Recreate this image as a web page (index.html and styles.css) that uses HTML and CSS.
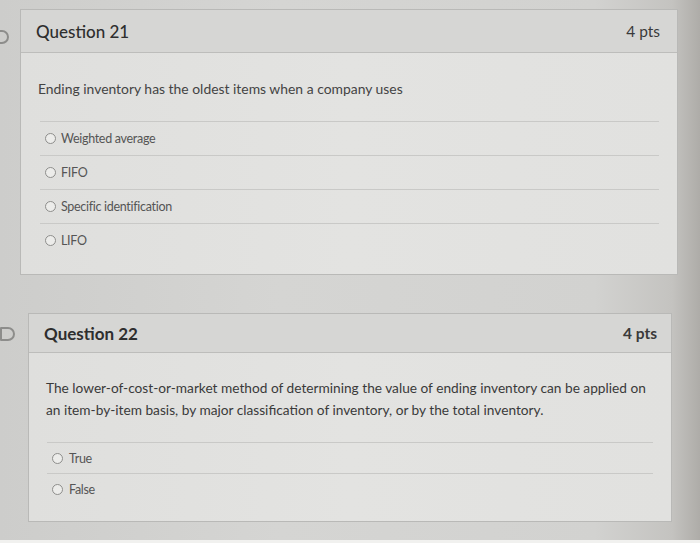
FILE: index.html
```html
<!DOCTYPE html>
<html lang="en">
<head>
<meta charset="utf-8">
<title>Quiz</title>
<link rel="stylesheet" href="styles.css">
</head>
<body>
<div class="page">
  <div class="q-row q-row-1">
    <svg class="flag flag-1" width="10" height="16" viewBox="0 0 10 16"><path d="M-6 2 H2 A6 6 0 0 1 2 14 H-6" fill="none" stroke="#8d8d8b" stroke-width="2"/></svg>
    <section class="card card-1">
      <header class="card-head">
        <h2 class="q-title">Question 21</h2>
        <span class="pts">4 pts</span>
      </header>
      <div class="card-body">
        <p class="q-text">Ending inventory has the oldest items when a company uses</p>
        <ul class="answers">
          <li class="answer"><span class="radio"></span><span>Weighted average</span></li>
          <li class="answer"><span class="radio"></span><span>FIFO</span></li>
          <li class="answer"><span class="radio"></span><span>Specific identification</span></li>
          <li class="answer"><span class="radio"></span><span>LIFO</span></li>
        </ul>
      </div>
    </section>
  </div>
  <div class="q-row q-row-2">
    <svg class="flag flag-2" width="16" height="16" viewBox="0 0 16 16"><path d="M1 2 H8 A6 6 0 0 1 8 14 H1 Z" fill="none" stroke="#8d8d8b" stroke-width="2" stroke-linejoin="round"/></svg>
    <section class="card card-2">
      <header class="card-head">
        <h2 class="q-title bold">Question 22</h2>
        <span class="pts bold">4 pts</span>
      </header>
      <div class="card-body">
        <p class="q-text">The lower-of-cost-or-market method of determining the value of ending inventory can be applied on<br>an item-by-item basis, by major classification of inventory, or by the total inventory.</p>
        <ul class="answers">
          <li class="answer"><span class="radio"></span><span>True</span></li>
          <li class="answer"><span class="radio"></span><span>False</span></li>
        </ul>
      </div>
    </section>
  </div>
</div>
</body>
</html>
```

FILE: styles.css
```css
* { box-sizing: border-box; }
html, body { margin: 0; padding: 0; }
body {
  width: 700px;
  height: 543px;
  overflow: hidden;
  font-family: Lato, "Open Sans", sans-serif;
  color: #4a4a4a;
  background:
    linear-gradient(to bottom, transparent 540px, #f1f1ef 540px),
    linear-gradient(to right, #cdcdcb 0%, #d5d5d3 40%, #d2d2d0 85%, #c4c3c0 96%, #aeaca8 100%);
}
.page {
  display: flex;
  flex-direction: column;
  padding-top: 9px;
  gap: 38px;
}
.q-row { position: relative; }
.flag { position: absolute; left: 0; }
.flag-1 { top: 20px; }
.flag-2 { top: 13px; }
.card {
  border: 1px solid #b9b9b7;
  background: linear-gradient(to right, #dfdfdd 0%, #e3e3e1 50%, #e1e1df 100%);
}
.card-1 { margin-left: 20px; width: 658px; }
.card-2 { margin-left: 28px; width: 644px; }
.card-head {
  display: flex;
  justify-content: space-between;
  align-items: center;
  background: #d6d6d4;
  border-bottom: 1px solid #bdbdbb;
  padding: 0 17px 0 15px;
}
.card-1 .card-head { height: 43px; }
.card-2 .card-head { height: 39px; padding-right: 14px; }
.q-title {
  margin: 0;
  font-size: 17px;
  font-weight: 500;
  color: #2e2e2e;
}
.pts {
  font-size: 15.5px;
  color: #3a3a3a;
}
.bold { font-weight: 700; }
.card-body { padding: 0 0 17px 17px; }
.q-text {
  margin: 0;
  font-size: 13.9px;
  line-height: 20px;
  color: #444;
}
.card-1 .q-text { padding-top: 26px; margin-bottom: 22px; }
.card-2 .q-text {
  padding-top: 24px;
  margin-bottom: 21px;
  font-size: 13.7px;
  line-height: 22px;
  color: #3a3a3a;
}
.answers {
  list-style: none;
  margin: 0 18px 0 2px;
  padding: 0;
}
.card-2 .answers { margin-left: 1px; }
.answer {
  display: flex;
  align-items: center;
  gap: 5px;
  border-top: 1px solid #c9c9c7;
  padding-left: 5px;
  font-size: 12.5px;
  color: #555;
  letter-spacing: -0.3px;
}
.card-1 .answer { height: 34px; }
.card-2 .answer { height: 31px; gap: 6px; }
.radio {
  width: 11px;
  height: 11px;
  border: 1px solid #8e8e8c;
  border-radius: 50%;
  background: #ececea;
  flex: none;
}
```
